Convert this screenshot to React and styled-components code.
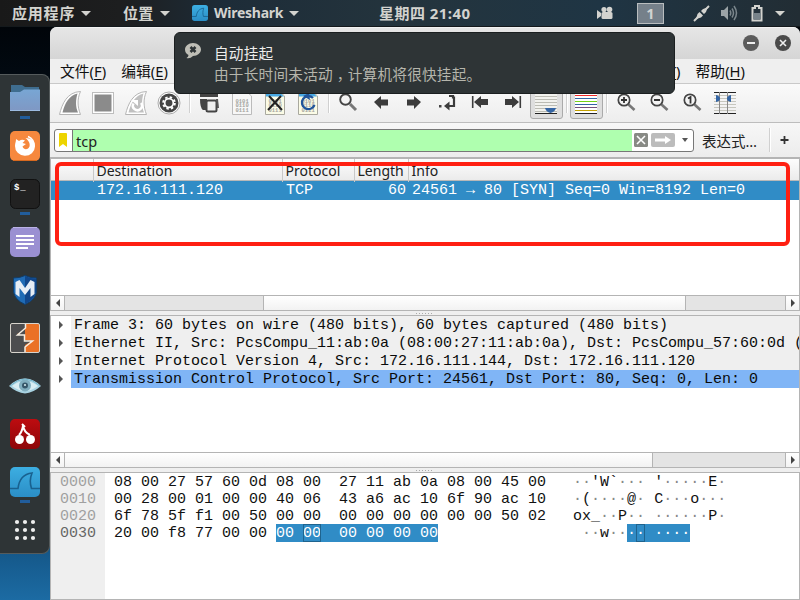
import React from "react";
import styled, { createGlobalStyle, css } from "styled-components";

const UI = `"Noto Sans", "Noto Sans CJK SC", sans-serif`;
const MONO = `"Liberation Mono", monospace`;

const GlobalStyle = createGlobalStyle`
  * { box-sizing: border-box; }
  body { margin: 0; overflow: hidden; }
  svg { display: block; flex: none; }
`;

const Desktop = styled.div`
  position: relative;
  display: grid;
  grid-template: 27px 573px / 50px 750px;
  width: 800px;
  height: 600px;
  overflow: hidden;
  font-family: ${UI};
  background: linear-gradient(180deg, #000205 0, #020a12 80px, #0b3a5c 400px, #135383 540px, #1c6ba3 600px);
`;

/* ---------- top panel ---------- */
const Panel = styled.header`
  grid-column: 1 / 3;
  display: flex;
  align-items: center;
  height: 27px;
  padding-left: 12px;
  color: #d3d3cf;
  background: linear-gradient(90deg, #191919 0, #1d1e1f 15%, #1d2c38 28%, #24343d 50%, #1f3544 75%, #222d34 100%);
  border-bottom: 1px solid #14191c;
`;
const PanelItem = styled.div`
  display: flex;
  align-items: center;
  gap: ${(p) => p.$gap ?? 6}px;
  width: ${(p) => p.$width}px;
  height: 26px;
  flex: none;
`;
const PanelText = styled.span`
  font: 700 ${(p) => p.$size || 15}px/26px ${UI};
  letter-spacing: ${(p) => p.$spacing || 0}px;
  white-space: nowrap;
`;
const Caret = styled.i`
  border: solid transparent;
  border-width: 5px 5px 0;
  border-top-color: #d3d3cf;
`;
const Workspace = styled.span`
  width: 27px;
  height: 21px;
  border: 1px solid #b9bdbf;
  background: #75808a;
  color: #d0d3d2;
  font: 700 14.5px/19px ${UI};
  text-align: center;
`;

/* ---------- dock ---------- */
const Dock = styled.nav`
  display: flex;
  flex-direction: column;
  margin-top: 47px;
  width: 50px;
  height: 480px;
  background: #2e3436;
  border: solid #555b5c;
  border-width: 1px 1px 1px 0;
  border-radius: 0 8px 8px 0;
`;
const DockCell = styled.div`
  display: flex;
  flex: none;
  flex-direction: column;
  align-items: center;
  height: 48px;
  padding-top: 8px;
  gap: 3px;
`;
const Running = styled.i`
  width: 10px;
  height: 3px;
  background: #215d9c;
`;

/* ---------- application window ---------- */
const Window = styled.main`
  display: flex;
  flex-direction: column;
  height: 573px;
  border-radius: 7px 7px 0 0;
  background: #efefef;
  overflow: hidden;
`;
const TitleBar = styled.div`
  display: flex;
  justify-content: flex-end;
  gap: 16px;
  height: 32px;
  padding: 7px 9px 0 0;
  background: linear-gradient(#e6e6e6, #d5d5d5);
  border-top: 1px solid #f2f2f2;
`;
const MenuBar = styled.div`
  display: flex;
  justify-content: space-between;
  height: 25px;
  padding: 0 55px 0 10px;
  border-bottom: 1px solid #c9c9c9;
  font-size: 14.8px;
  line-height: 25px;
  color: #111;
`;
const MenuGroup = styled.div`
  display: flex;
  gap: ${(p) => p.$gap}px;
`;
const Menu = styled.span`
  white-space: nowrap;
  u { text-underline-offset: 2px; }
`;
const ToolBar = styled.div`
  display: flex;
  height: 39px;
  padding: 0 0 0 4px;
  background: linear-gradient(#fafafa, #ededed);
  border-bottom: 1px solid #bdbdbd;
`;
const ToolButton = styled.div`
  width: 33px;
  height: 34px;
  padding-top: ${(p) => (p.$on ? 2 : 3)}px;
  ${(p) =>
    p.$on &&
    css`
      border: 1px solid #aaa;
      border-radius: 3px;
      background: #dedede;
      height: 35px;
      svg { margin-left: -1px; }
    `}
`;
const Separator = styled.i`
  width: 7px;
  height: 24px;
  margin-top: ${(p) => p.$top ?? 5}px;
  flex: none;
  background: linear-gradient(90deg, transparent 3px, #d0d0d0 3px 4px, #fff 4px 5px, transparent 5px);
`;
const FilterBar = styled.div`
  display: flex;
  align-items: center;
  height: 34px;
  padding: 0 0 0 4px;
  background: linear-gradient(#f7f7f7, #ececec);
  font-size: 14.5px;
  color: #222;
`;
const FilterBox = styled.div`
  display: flex;
  align-items: center;
  width: 640px;
  height: 23px;
  border: 1px solid #777;
  border-radius: 3px;
  background: #fff;
  overflow: hidden;
`;
const Bookmark = styled.div`
  width: 18px;
  height: 21px;
  padding: 3px 0 0 4px;
  border-right: 1px solid #777;
`;
const FilterText = styled.div`
  width: 559px;
  height: 21px;
  padding-left: 3px;
  line-height: 22px;
  background: #afffaf;
`;
const FilterActions = styled.div`
  display: flex;
  align-items: center;
  gap: 3px;
  padding-left: 2px;
`;
const FilterDrop = styled.i`
  margin-left: 4px;
  border: solid transparent;
  border-width: 4px 3.5px 0;
  border-top-color: #555;
`;
const Expression = styled.span`
  margin-left: 8px;
  width: 64px;
  line-height: 30px;
  padding-top: 1px;
  white-space: nowrap;
`;

/* ---------- panes ---------- */
const Pane = styled.section`
  display: flex;
  flex-direction: column;
  height: ${(p) => p.$height}px;
  background: #fff;
  border: 1px solid #b4b4b4;
  border-top-width: ${(p) => p.$top || 1}px;
`;
const PaneBody = styled.div`
  flex: 1;
  min-height: 0;
  overflow: hidden;
`;
const HeaderRow = styled.div`
  display: grid;
  grid-template-columns: 43px 189px 72px 54px 1fr;
  height: 22px;
  background: linear-gradient(#fdfdfd, #ebebeb);
  border-bottom: 1px solid #b8b8b8;
`;
const HeaderCell = styled.div`
  padding-left: 2.5px;
  border-right: 1px solid #c8c8c8;
  font-size: 14px;
  line-height: 23px;
  color: #222;
  &:last-child { border-right: 0; }
`;
const PacketRow = styled.div`
  display: grid;
  grid-template-columns: 46px 189px 69px 57px 1fr;
  height: 19px;
  background: #308cc6;
  color: #fff;
  font: 15px/20px ${MONO};
  white-space: pre;
`;
const Num = styled.span`
  text-align: right;
  padding-right: 6px;
`;
const ScrollBar = styled.div`
  display: grid;
  grid-template-columns: 14px ${(p) => p.$cols} 14px;
  height: 15px;
  border-top: 1px solid #b4b4b4;
`;
const ScrollArrow = styled.i`
  display: flex;
  align-items: center;
  justify-content: center;
  background: linear-gradient(#fff, #f3f3f3);
  border: solid #b4b4b4;
  border-width: ${(p) => (p.$right ? "0 0 0 1px" : "0 1px 0 0")};
  &::after {
    content: "";
    border: solid transparent;
    border-width: 4px;
    ${(p) =>
      p.$right
        ? "border-left-color: #444; border-right-width: 0;"
        : "border-right-color: #444; border-left-width: 0;"}
  }
`;
const Track = styled.i`
  background: #e4e4e4;
`;
const Thumb = styled.i`
  background: linear-gradient(#fff, #f2f2f2);
  border: solid #b4b4b4;
  border-width: ${(p) => (p.$first ? "0 1px 0 0" : "0 1px")};
`;
const Splitter = styled.div`
  display: flex;
  align-items: center;
  justify-content: center;
  height: ${(p) => p.$height}px;
  &::after {
    content: "";
    width: 18px;
    height: 1px;
    background: repeating-linear-gradient(90deg, #aaa 0 1px, transparent 1px 3px);
  }
`;
const TreeRow = styled.div`
  display: flex;
  height: 18px;
`;
const Twisty = styled.i`
  display: flex;
  align-items: center;
  width: 20px;
  padding-left: 8px;
  flex: none;
  &::after {
    content: "";
    border: solid transparent;
    border-width: 4px 0 4px 4px;
    border-left-color: #555;
  }
`;
const TreeText = styled.div`
  flex: 1;
  min-width: 0;
  overflow: hidden;
  padding-left: 3px;
  background: ${(p) => (p.$selected ? "#80b5f6" : "#efefef")};
  color: #0a0a0a;
  font: 15px/19px ${MONO};
  white-space: pre;
`;
const HexView = styled.div`
  display: grid;
  grid-template-columns: 54px 1fr;
  height: 100%;
  font: 15px/19px ${MONO};
  white-space: pre;
`;
const Offsets = styled.div`
  padding-left: 9px;
  background: #efefef;
`;
const Offset = styled.div`
  height: 17px;
  color: ${(p) => (p.$current ? "#666" : "#a0a0a0")};
`;
const HexRows = styled.div`
  padding-left: 9px;
  color: #111;
`;
const HexRow = styled.div`
  display: flex;
  height: 17px;
`;
const Bytes = styled.span`
  width: 459px;
`;
const Dot = styled.span`
  color: #888;
`;
const Selected = styled.span`
  display: inline-block;
  height: 18px;
  background: #308cc6;
  color: #fff;
  ${Dot} { color: #fff; }
`;
const Hovered = styled.span`
  outline: 1px solid #1f648f;
  outline-offset: -1px;
  display: inline-block;
  height: 18px;
`;

/* ---------- overlays ---------- */
const Notification = styled.aside`
  position: absolute;
  left: 174px;
  top: 32px;
  display: flex;
  gap: 13px;
  width: 501px;
  height: 62px;
  padding: 10px 0 0 10px;
  border: 1px solid #1b1f20;
  border-radius: 6px;
  background: #2e3436;
  font-size: 14.67px;
  letter-spacing: 0.2px;
  line-height: 21px;
  color: #eeeeec;
`;
const NotificationBody = styled.p`
  margin: 0;
  color: #b5b5ac;
  line-height: 20px;
`;
const Comma = styled.span`
  padding-left: 4px;
  margin-right: -4px;
`;
const Highlight = styled.div`
  position: absolute;
  left: 55px;
  top: 162px;
  width: 735px;
  height: 84px;
  border: 4px solid #ff2012;
  border-radius: 6px;
`;

/* ---------- dock and panel drawings ---------- */
const Ico = ({ children, size = 30 }) => (
  <svg width={size} height={size} viewBox="0 0 30 30">{children}</svg>
);
const SharkLogo = ({ size }) => (
  <Ico size={size}>
    <defs>
      <linearGradient id="shark" x2="0" y2="1"><stop stopColor="#3caee2" /><stop offset="1" stopColor="#2b8ec6" /></linearGradient>
    </defs>
    <rect width="30" height="30" rx="5" fill="url(#shark)" />
    <path d="M0 21.500H8C9 13 13 7 22 6C20 11 20 17 21.500 21.500H30" fill="none" stroke="#19618f" strokeWidth="1.600" />
  </Ico>
);
const dockItems = [
  { run: true, icon: (
    <Ico>
      <defs><linearGradient id="fold" x2="0" y2="1"><stop stopColor="#78a6d4" /><stop offset="1" stopColor="#7f98c4" /></linearGradient></defs>
      <path d="M1 2H12L15 4H29V12H1Z" fill="#3f6d8f" />
      <path d="M0 9H10L14 6.500H30V27.500H0Z" fill="url(#fold)" />
      <path d="M0 27.500H30" stroke="#9dbbe0" />
    </Ico>) },
  { icon: (
    <Ico>
      <rect width="30" height="30" rx="5" fill="#f6883e" /><path d="M3 29.500H27" stroke="#d7691f" />
      <path d="M6 8L9 10Q12 8 15 9.500L12.500 12L16 13L12.500 15.500C14 19.500 18.500 18.500 19.500 15.500C20.500 12 18 9 15.500 7C22 7 25 11 25 15.500A10 9.500 0 0 1 5 15C5 12 6 11 6 8Z" fill="#fff" />
      <path d="M18 5.500Q24.500 8.500 24 15" fill="none" stroke="#fff" strokeWidth="1.500" />
    </Ico>) },
  { run: true, icon: (
    <Ico>
      <rect x=".5" y=".5" width="29" height="29" rx="5" fill="#222" stroke="#111" />
      <text x="4" y="10.500" fontFamily="Liberation Mono" fontWeight="700" fontSize="9" letterSpacing=".8" fill="#fff">$_</text>
    </Ico>) },
  { icon: (
    <Ico>
      <rect width="30" height="30" rx="5" fill="#9a90d2" /><path d="M3 .5H27" stroke="#bab2e6" />
      <path d="M6 9H24M6 13H24M6 17H24M6 21H18" stroke="#fff" strokeWidth="2" />
    </Ico>) },
  { icon: (
    <Ico>
      <path d="M15 .5Q20 3 26.500 3V17Q25 25 15 29.500Q5 25 3.500 17V3Q10 3 15 .5Z" fill="#1f6bb5" stroke="#123d68" />
      <path d="M15 1V29Q24 25 26 17V3.500Q20 3.500 15 1Z" fill="#11468a" />
      <path d="M5.500 7L9.500 5L15 13L20.500 5L24.500 7V19L20.500 22V13L15 20L9.500 13V22L5.500 19Z" fill="#e6edf5" />
    </Ico>) },
  { icon: (
    <Ico>
      <rect x=".5" y=".5" width="29" height="29" rx="1.500" fill="#4d4d4f" />
      <path d="M15 1H29V29H15V22L22 18L14 17V11L7 11L15 7Z" fill="#ea7125" />
      <path d="M7 11.500L15 6V17L8 12Z" fill="#4d4d4f" />
      <path d="M15.500 1V5L7.500 12H14.500V18H22.500L15 24V29" fill="none" stroke="#f5eee4" strokeWidth="1.500" />
      <rect x=".5" y=".5" width="29" height="29" rx="1.500" fill="none" stroke="#d7d3cc" />
    </Ico>) },
  { icon: (
    <svg width="32" height="30" viewBox="0 0 32 30">
      <path d="M0 15Q8 7 16 7.500Q24 7 32 15Q24 22 16 22.500Q8 22 0 15Z" fill="#a9d3e2" />
      <path d="M3 15Q16 5 29 15Q16 25 3 15Z" fill="#d9eef3" />
      <circle cx="16" cy="14.500" r="6" fill="#80aebf" /><circle cx="16" cy="14.500" r="3" fill="#36576a" /><circle cx="16" cy="14" r="1" fill="#d9eef3" />
      <path d="M1 15Q16 1 31 15" fill="none" stroke="#74b5cb" />
    </svg>) },
  { icon: (
    <Ico>
      <defs><linearGradient id="cherry" x2="0" y2="1"><stop stopColor="#bd0c10" /><stop offset="1" stopColor="#8d0609" /></linearGradient></defs>
      <rect width="30" height="30" rx="5" fill="url(#cherry)" />
      <circle cx="9.500" cy="20.500" r="4.500" fill="#fff" /><circle cx="20.500" cy="20.500" r="4.500" fill="#fff" />
      <path d="M9 16Q12 13 13 7M13 7Q14 13 20 16M12 5L15 8" fill="none" stroke="#fff" strokeWidth="2" />
    </Ico>) },
  { run: true, icon: <SharkLogo /> },
  { icon: (
    <Ico>
      {[7, 15, 23].map((y) => [7, 15, 23].map((x) => <circle key={x + "-" + y} cx={x} cy={y} r="2.100" fill="#eee" />))}
    </Ico>) },
];

/* ---------- toolbar drawings ---------- */
const Tool = ({ on, children }) => (
  <ToolButton $on={on}>
    <svg width="33" height="31" viewBox="0 0 33 31">{children}</svg>
  </ToolButton>
);
const Fin = ({ fill }) => (
  <>
    <path d="M5.500 27.500C8 17 13 5 26.500 4.500C23 12 23.500 20 26.500 27.500Z" fill="#fff" stroke="#b5b5b5" />
    <path d="M8.500 25.500C11 16 15 8.500 23.500 6.500C21.500 13 21.500 20 24 25.500Z" fill={fill} />
  </>
);
const Doc = ({ tint, band, children }) => (
  <>
    <path d="M6.500 4H20L25.500 9V27.500H6.500Z" fill={tint} stroke={band ? "#a9a99f" : "#bbb"} />
    {band && <path d="M7 4.500H20L25 9.500H7Z" fill="#49a9e4" />}
    <g fontFamily="Liberation Mono" fontWeight="700" fontSize="5.500" fill="#a5a5a0">
      <text x="9.500" y="15.500">0101</text>
      <text x="9.500" y="20">0110</text>
      <text x="9.500" y="24.800">0111</text>
    </g>
    {children}
  </>
);
const Magnifier = ({ children }) => (
  <>
    <path d="M18.500 17.500L24.500 23" stroke="#777" strokeWidth="2.600" />
    <circle cx="14" cy="13" r="5.700" fill="#f4f4f4" stroke="#444" strokeWidth="1.700" />
    {children}
  </>
);
const arrowLeft = "M9 15L16 9V12.500H23V18.500H16V22Z";
const arrowRight = "M23 15L16 9V12.500H9V18.500H16V22Z";

const hexLines = [
  ["08 00 27 57 60 0d 08 00  27 11 ab 0a 08 00 45 00", "··'W`··· '·····E·"],
  ["00 28 00 01 00 00 40 06  43 a6 ac 10 6f 90 ac 10", "·(····@· C···o···"],
  ["6f 78 5f f1 00 50 00 00  00 00 00 00 00 00 50 02", "ox_··P·· ······P·"],
];
const Ascii = ({ text }) => [...text].map((c, i) => (c === "·" ? <Dot key={i}>·</Dot> : c));

const tree = [
  "Frame 3: 60 bytes on wire (480 bits), 60 bytes captured (480 bits)",
  "Ethernet II, Src: PcsCompu_11:ab:0a (08:00:27:11:ab:0a), Dst: PcsCompu_57:60:0d (",
  "Internet Protocol Version 4, Src: 172.16.111.144, Dst: 172.16.111.120",
  "Transmission Control Protocol, Src Port: 24561, Dst Port: 80, Seq: 0, Len: 0",
];

export default function App() {
  return (
    <Desktop>
      <GlobalStyle />
      <Panel>
        <PanelItem $width={111}><PanelText $spacing={0.8}>应用程序</PanelText><Caret /></PanelItem>
        <PanelItem $width={69}><PanelText $spacing={0.3}>位置</PanelText><Caret /></PanelItem>
        <PanelItem $width={187}><SharkLogo size={16} /><PanelText $size={14} $spacing={-0.25}>Wireshark</PanelText><Caret /></PanelItem>
        <PanelItem $width={218}><PanelText $size={15} $spacing={0.45}>星期四 21:40</PanelText></PanelItem>
        <PanelItem $width={203} $gap={0}>
          <PanelItem $width={40}>
            <svg width="16" height="14" viewBox="0 0 16 14" fill="#d3d3cf"><circle cx="7" cy="3.500" r="2.600" /><circle cx="12.500" cy="3.500" r="2.800" /><rect x="4.500" y="6" width="11" height="7" rx="1.500" /><path d="M0 4L4 7V10L0 13Z" /></svg>
          </PanelItem>
          <PanelItem $width={56}><Workspace>1</Workspace></PanelItem>
          <PanelItem $width={28}>
            <svg width="17" height="17" viewBox="0 0 17 17"><path d="M1 16L5 12M12 5L16 1" stroke="#d3d3cf" strokeWidth="1.900" /><path d="M3 14L4.500 9L6.500 7L10 10.500L8 12.500ZM8 6L10 4L14.500 2.500L13 7L11 9Z" fill="#d3d3cf" /></svg>
          </PanelItem>
          <PanelItem $width={30}>
            <svg width="17" height="16" viewBox="0 0 17 16" fill="none" stroke="#7b868c" strokeWidth="1.500"><path d="M0 5H3L7 1V15L3 11H0Z" fill="#9ba3a6" stroke="none" /><path d="M9 5.500Q10.500 8 9 10.500M11 3.500Q14 8 11 12.500M13 1Q18 8 13 15" /></svg>
          </PanelItem>
          <PanelItem $width={24}>
            <svg width="12" height="17" viewBox="0 0 12 17"><path d="M4 1H8V3H10.500V15.500H1.500V3H4Z" fill="#26333c" stroke="#d3d3cf" strokeWidth="2" /><path d="M2.500 8H9.500V14.500H2.500Z" fill="#78838a" /></svg>
          </PanelItem>
          <Caret />
        </PanelItem>
      </Panel>

      <Dock>
        {dockItems.map((d, i) => (
          <DockCell key={i}>{d.icon}{d.run && <Running />}</DockCell>
        ))}
      </Dock>

      <Window>
        <TitleBar>
          <svg width="16" height="16" viewBox="0 0 16 16"><circle cx="8" cy="8" r="8" fill="#5c5c5c" /><path d="M4 8H12" stroke="#eee" strokeWidth="2" /></svg>
          <svg width="16" height="16" viewBox="0 0 16 16"><circle cx="8" cy="8" r="8" fill="#4a4a4a" /><path d="M5 5L11 11M11 5L5 11" stroke="#eee" strokeWidth="1.600" /></svg>
        </TitleBar>
        <MenuBar>
          <MenuGroup $gap={15}><Menu>文件(<u>F</u>)</Menu><Menu>编辑(<u>E</u>)</Menu></MenuGroup>
          <MenuGroup $gap={15}><Menu>工具(<u>T</u>)</Menu><Menu>帮助(<u>H</u>)</Menu></MenuGroup>
        </MenuBar>
        <ToolBar>
          <Tool><Fin fill="#8a8a8a" /></Tool>
          <Tool><rect x="5.500" y="5.500" width="21" height="21" fill="#fff" stroke="#bdbdbd" /><rect x="7.500" y="7.500" width="17" height="17" fill="#8b8b8b" /></Tool>
          <Tool><Fin fill="#c0c0c0" /><path d="M13.500 16.500A4.500 4.500 0 1 0 21 16" fill="none" stroke="#fff" strokeWidth="2.500" /><path d="M11 13H18V19Z" fill="#fff" /></Tool>
          <Tool>
            <circle cx="16" cy="16" r="11" fill="#fff" stroke="#aaa" /><circle cx="16" cy="16" r="9.500" fill="#444" />
            <circle cx="16" cy="16" r="5.800" fill="none" stroke="#fff" strokeWidth="2" strokeDasharray="2.400 2.155" /><circle cx="16" cy="16" r="4.300" fill="#444" stroke="#fff" strokeWidth="1.700" />
          </Tool>
          <Separator />
          <Tool><path d="M7 7H25V10H7ZM7 12H14V23H10Q7 21 7 12Z" fill="#444" /><rect x="13.500" y="13.500" width="10" height="11" rx="1.500" fill="#eee" stroke="#444" strokeWidth="2" /><path d="M24 12L25 21" stroke="#555" strokeWidth="2" /></Tool>
          <Tool><Doc tint="#f7f7f7" /></Tool>
          <Tool><Doc tint="#fbfbe6" band><path d="M10 9L23 23M22 9L9 23" stroke="#222" strokeWidth="2" /></Doc></Tool>
          <Tool><Doc tint="#fbfbe6" band><path d="M21 11A6.500 6.500 0 1 0 22.500 18" fill="none" stroke="#21559b" strokeWidth="2.300" /><path d="M17 6L18 13L11 9Z" fill="#21559b" /></Doc></Tool>
          <Separator />
          <Tool><path d="M18 17L24 23" stroke="#777" strokeWidth="3" /><circle cx="13.500" cy="12.500" r="5.300" fill="#f4f4f4" stroke="#444" strokeWidth="1.900" /></Tool>
          <Tool><path d={arrowLeft} fill="#3c3c3c" /></Tool>
          <Tool><path d={arrowRight} fill="#3c3c3c" /></Tool>
          <Tool><path d="M18 9H22V10.500H23V19H17" fill="none" stroke="#3c3c3c" strokeWidth="2.200" /><path d="M13 19L18.500 14.500V23.500Z" fill="#3c3c3c" /><rect x="8" y="18" width="2.500" height="2.500" fill="#444" /></Tool>
          <Tool><path d="M8.700 9V21" stroke="#3c3c3c" strokeWidth="1.600" /><path d="M10 15L17 9V12H24V18H17V21Z" fill="#3c3c3c" /></Tool>
          <Tool><path d="M23.300 9V21" stroke="#3c3c3c" strokeWidth="1.600" /><path d="M22 15L15 9V12H8V18H15V21Z" fill="#3c3c3c" /></Tool>
          <Tool on><rect x="5" y="4" width="22" height="22" fill="#f2f2ee" /><path d="M5 6.500H27M5 9.500H27M5 12.500H27M5 15.500H27M5 18.500H27M5 21.500H27M5 24.500H27" stroke="#bbbbb3" /><path d="M5 26.500H27" stroke="#222" /><path d="M15 21H26Q25 25 20.500 26Q16 25 15 21Z" fill="#3465a4" /></Tool>
          <Separator />
          <Tool on><rect x="5" y="4" width="22" height="23" fill="#fff" />{["#ef2929", "#3465a4", "#73d216", "#3465a4", "#75507b", "#c4a000", "#222"].map((c, i) => <path key={i} d={`M5 ${8.5 + i * 3}H27`} stroke={c} strokeWidth="1.200" />)}</Tool>
          <Separator />
          <Tool><Magnifier><path d="M11 13H17M14 10V16" stroke="#333" strokeWidth="1.800" /></Magnifier></Tool>
          <Tool><Magnifier><path d="M11 13H17" stroke="#333" strokeWidth="1.800" /></Magnifier></Tool>
          <Tool><Magnifier><path d="M12 11.500L14.500 10V16.500" fill="none" stroke="#333" strokeWidth="1.800" /></Magnifier></Tool>
          <Tool><path d="M5 8.500H27M5 11.500H27M5 14.500H27M5 17.500H27M5 20.500H27M5 23.500H27" stroke="#c6c6be" /><path d="M5 5.500H27M5 26.500H27" stroke="#222" /><path d="M10.500 5V27M18.500 5V27" stroke="#888" /><path d="M7 8Q11 9 11 11.500Q11 14 7 15ZM22 8Q18 9 18 11.500Q18 14 22 15Z" fill="#3465a4" /></Tool>
        </ToolBar>
        <FilterBar>
          <FilterBox>
            <Bookmark><svg width="8" height="14" viewBox="0 0 8 14"><path d="M0 1Q0 0 1 0H7Q8 0 8 1V14L4 11L0 14Z" fill="#edd400" /></svg></Bookmark>
            <FilterText>tcp</FilterText>
            <FilterActions>
              <svg width="14" height="14" viewBox="0 0 14 14"><rect width="14" height="14" rx="1.500" fill="#888a85" /><path d="M3 3L11 11M11 3L3 11" stroke="#fff" strokeWidth="1.600" /></svg>
              <svg width="24" height="14" viewBox="0 0 24 14"><rect width="24" height="14" rx="2" fill="#bcbcbc" /><path d="M4 5.500H14V3L20 7L14 11V8.500H4Z" fill="#fff" /></svg>
              <FilterDrop />
            </FilterActions>
          </FilterBox>
          <Expression>表达式…</Expression>
          <Separator $top={0} />
          <svg width="22" height="16" viewBox="0 0 22 16"><path d="M7.500 8H15.500M11.500 4V12" stroke="#333" strokeWidth="1.800" /></svg>
        </FilterBar>

        <Pane $height={154} $top={2}>
          <PaneBody>
            <HeaderRow>
              <HeaderCell />
              <HeaderCell>Destination</HeaderCell>
              <HeaderCell>Protocol</HeaderCell>
              <HeaderCell>Length</HeaderCell>
              <HeaderCell>Info</HeaderCell>
            </HeaderRow>
            <PacketRow>
              <span />
              <span>172.16.111.120</span>
              <span>TCP</span>
              <Num>60</Num>
              <span>24561 → 80 [SYN] Seq=0 Win=8192 Len=0</span>
            </PacketRow>
          </PaneBody>
          <ScrollBar $cols="198px 423px 1fr"><ScrollArrow /><Track /><Thumb /><Track /><ScrollArrow $right /></ScrollBar>
        </Pane>
        <Splitter $height={4} />
        <Pane $height={153}>
          <PaneBody>
            {tree.map((t, i) => (
              <TreeRow key={i}><Twisty /><TreeText $selected={i === 3}>{t}</TreeText></TreeRow>
            ))}
          </PaneBody>
          <ScrollBar $cols="588px 1fr"><ScrollArrow /><Thumb $first /><Track /><ScrollArrow $right /></ScrollBar>
        </Pane>
        <Splitter $height={4} />
        <Pane $height={128}>
          <HexView>
            <Offsets>
              <Offset>0000</Offset><Offset>0010</Offset><Offset>0020</Offset><Offset $current>0030</Offset>
            </Offsets>
            <HexRows>
              {hexLines.map(([b, a]) => (
                <HexRow key={b}><Bytes>{b}</Bytes><span><Ascii text={a} /></span></HexRow>
              ))}
              <HexRow>
                <Bytes>20 00 f8 77 00 00 <Selected>00 <Hovered>00</Hovered>  00 00 00 00</Selected></Bytes>
                <span> <Ascii text="··w··" /><Selected><Dot>·</Dot><Hovered><Dot>·</Dot></Hovered> <Dot>····</Dot></Selected></span>
              </HexRow>
            </HexRows>
          </HexView>
        </Pane>
      </Window>

      <Notification>
        <svg width="16" height="16" viewBox="0 0 16 16"><path d="M8 0C12.500 0 16 3 16 6.500S12.500 13 8 13Q5 16 1.500 15Q3.500 14 3.500 12Q0 10 0 6.500C0 3 3.500 0 8 0Z" fill="#bebeb6" /><path d="M5.500 4L10.500 9M10.500 4L5.500 9" stroke="#2e3436" strokeWidth="2.600" /></svg>
        <div>
          自动挂起
          <NotificationBody>由于长时间未活动<Comma>，</Comma>计算机将很快挂起。</NotificationBody>
        </div>
      </Notification>
      <Highlight />
    </Desktop>
  );
}
